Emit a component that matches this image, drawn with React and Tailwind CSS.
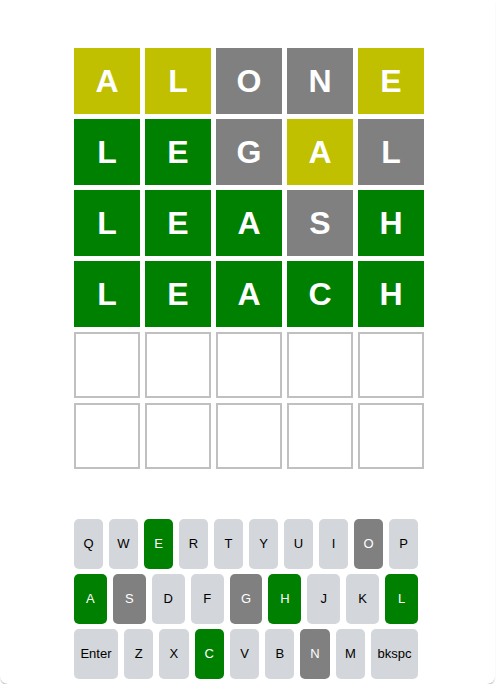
import React from "react";

const G = "bg-[#008000]";
const Y = "bg-[#c0c000]";
const X = "bg-[#808080]";

const rows = [
  [["A", Y], ["L", Y], ["O", X], ["N", X], ["E", Y]],
  [["L", G], ["E", G], ["G", X], ["A", Y], ["L", X]],
  [["L", G], ["E", G], ["A", G], ["S", X], ["H", G]],
  [["L", G], ["E", G], ["A", G], ["C", G], ["H", G]],
  null,
  null,
];

const keyState = {
  E: "g", A: "g", H: "g", L: "g", C: "g",
  O: "x", S: "x", G: "x", N: "x",
};

function Key({ k, wide }) {
  const s = keyState[k];
  const cls =
    s === "g"
      ? "bg-[#008000] text-white"
      : s === "x"
      ? "bg-[#808080] text-white"
      : "bg-[#d3d6da] text-black";
  return (
    <div
      className={`${cls} ${wide ? wide : "flex-1"} h-[50px] rounded-[5px] flex items-center justify-center text-[13px]`}
    >
      {k}
    </div>
  );
}

export default function App() {
  return (
    <div
      className="w-[495px] h-[684px] bg-white rounded-b-[8px] shadow-[0_2px_2px_-1px_rgba(0,0,0,0.4)]"
      style={{ fontFamily: '"Liberation Sans", Arial, sans-serif' }}
    >
      <div className="pt-[48px] pl-[74px] flex flex-col gap-[5px]">
        {rows.map((r, i) => (
          <div key={i} className="flex gap-[5px]">
            {r
              ? r.map(([l, c], j) => (
                  <div
                    key={j}
                    className={`${c} w-[66px] h-[66px] flex items-center justify-center text-white font-bold text-[32px]`}
                  >
                    {l}
                  </div>
                ))
              : [0, 1, 2, 3, 4].map((j) => (
                  <div
                    key={j}
                    className="w-[66px] h-[66px] border-2 border-[#c0c0c0]"
                  />
                ))}
          </div>
        ))}
      </div>
      <div className="mt-[50px] ml-[74px] w-[344px] flex flex-col gap-[5px]">
        <div className="flex gap-[6px]">
          {"QWERTYUIOP".split("").map((k) => (
            <Key key={k} k={k} />
          ))}
        </div>
        <div className="flex gap-[6px]">
          {"ASDFGHJKL".split("").map((k) => (
            <Key key={k} k={k} />
          ))}
        </div>
        <div className="flex gap-[6px]">
          <Key k="Enter" wide="w-[44px]" />
          {"ZXCVBNM".split("").map((k) => (
            <Key key={k} k={k} />
          ))}
          <Key k="bkspc" wide="w-[47px]" />
        </div>
      </div>
    </div>
  );
}
